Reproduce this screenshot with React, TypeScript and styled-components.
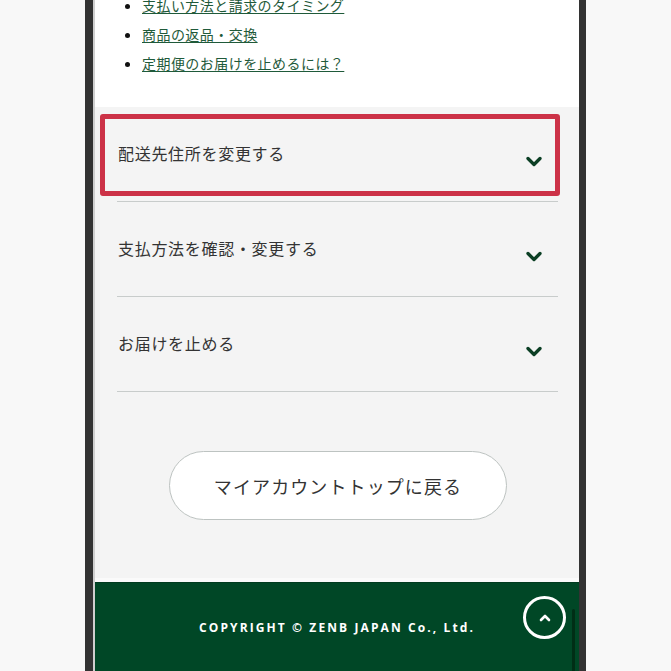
import React from "react";
import styled, { createGlobalStyle } from "styled-components";

const Global = createGlobalStyle`
  html, body { margin: 0; padding: 0; background: #f8f8f8; }
  body { font-family: "Noto Sans CJK JP", "Noto Sans", sans-serif; overflow: hidden; }
`;

const Page = styled.div`
  width: 671px;
  height: 671px;
  overflow: hidden;
  display: flex;
  justify-content: flex-start;
  padding-left: 85px;
  box-sizing: border-box;
`;

const Frame = styled.div`
  width: 501px;
  box-sizing: border-box;
  border-left: 8px solid #333333;
  border-right: 7px solid #333333;
  display: flex;
  flex-direction: column;
`;

const Inner = styled.div`
  border-left: 2px solid #cfcfcf;
  display: flex;
  flex-direction: column;
`;

const LinkSection = styled.section`
  background: #ffffff;
  height: 107px;
  overflow: hidden;
`;

const LinkList = styled.ul`
  margin: -9px 0 0;
  padding: 0 0 0 47px;
  list-style: disc;
  color: #111;
`;

const LinkItem = styled.li`
  font-size: 14px;
  line-height: 29px;
  letter-spacing: 0.45px;
  a {
    color: #1f5a3a;
    text-decoration: underline;
    text-underline-offset: 2px;
  }
`;

const AccordionSection = styled.section`
  background: #f4f4f4;
  padding: 0 21px 58px 22px;
  display: flex;
  flex-direction: column;
`;

const Row = styled.div`
  position: relative;
  height: 95px;
  border-bottom: 1px solid #c8cccb;
  box-sizing: border-box;
  display: flex;
  align-items: center;
  justify-content: space-between;
  padding: 0 16px 0 1px;
`;

const RowLabel = styled.span`
  font-size: 16px;
  color: #333;
  letter-spacing: 0.7px;
  margin-top: -2px;
`;

const Chevron = styled.svg`
  width: 16px;
  height: 11px;
  margin-top: 14px;
`;

const Highlight = styled.div`
  position: absolute;
  left: -17px;
  right: -2px;
  top: 7px;
  bottom: 5px;
  border: 5px solid #cc3247;
  border-radius: 3px;
  pointer-events: none;
`;

const ButtonWrap = styled.div`
  display: flex;
  justify-content: center;
  padding-top: 59px;
  padding-left: 1px;
`;

const BackButton = styled.button`
  width: 338px;
  height: 69px;
  border-radius: 35px;
  border: 1px solid #bdc3c1;
  background: #fff;
  font-family: "Noto Sans CJK JP", sans-serif;
  font-size: 18px;
  letter-spacing: 1.1px;
  color: #333;
`;

const WhiteStrip = styled.div`
  height: 4px;
  background: #fafafa;
`;

const Footer = styled.footer`
  position: relative;
  background: #004726;
  border-top: 1px solid #003a1f;
  height: 100px;
  display: flex;
  justify-content: center;
  padding-top: 37px;
  box-sizing: border-box;
`;

const Copyright = styled.p`
  margin: 0;
  font-family: "Open Sans", "Liberation Sans", sans-serif;
  font-weight: 700;
  font-size: 12px;
  letter-spacing: 2.1px;
  color: #ffffff;
  line-height: 16px;
`;

const TopButton = styled.div`
  position: absolute;
  left: 428px;
  top: 13px;
  width: 37px;
  height: 37px;
  border: 3px solid #fff;
  border-radius: 50%;
  display: flex;
  align-items: center;
  justify-content: center;
`;

const ScrollBar = styled.div`
  position: absolute;
  right: 4px;
  top: 26px;
  bottom: 0;
  width: 3px;
  border-radius: 2px;
  background: #002e16;
`;

const ChevronDown = () => (
  <Chevron viewBox="0 0 16 11">
    <path d="M2 2.5 L8 8.5 L14 2.5" fill="none" stroke="#0b3f24" strokeWidth="3.3" strokeLinecap="round" strokeLinejoin="round" />
  </Chevron>
);

const items = ["配送先住所を変更する", "支払方法を確認・変更する", "お届けを止める"];
const links = ["支払い方法と請求のタイミング", "商品の返品・交換", "定期便のお届けを止めるには？"];

export default function App() {
  return (
    <>
      <Global />
      <Page>
        <Frame>
          <Inner>
            <LinkSection>
              <LinkList>
                {links.map((l) => (
                  <LinkItem key={l}>
                    <a href="#">{l}</a>
                  </LinkItem>
                ))}
              </LinkList>
            </LinkSection>
            <AccordionSection>
              {items.map((t, i) => (
                <Row key={t}>
                  <RowLabel>{t}</RowLabel>
                  <ChevronDown />
                  {i === 0 && <Highlight />}
                </Row>
              ))}
              <ButtonWrap>
                <BackButton>マイアカウントトップに戻る</BackButton>
              </ButtonWrap>
            </AccordionSection>
            <WhiteStrip />
            <Footer>
              <Copyright>COPYRIGHT © ZENB JAPAN Co., Ltd.</Copyright>
              <TopButton>
                <svg width="14" height="10" viewBox="0 0 14 10">
                  <path d="M3 7 L7 3 L11 7" fill="none" stroke="#fff" strokeWidth="2.6" strokeLinecap="round" strokeLinejoin="round" />
                </svg>
              </TopButton>
              <ScrollBar />
            </Footer>
          </Inner>
        </Frame>
      </Page>
    </>
  );
}
